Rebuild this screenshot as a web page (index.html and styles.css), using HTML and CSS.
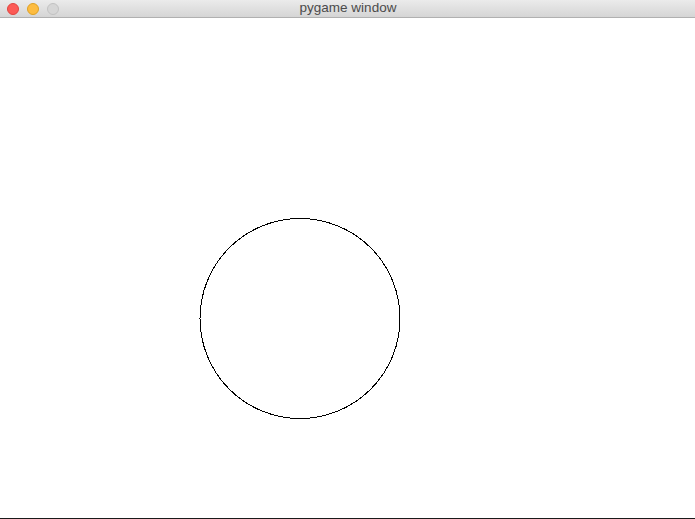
FILE: index.html
```html
<!DOCTYPE html>
<html>
<head>
<meta charset="utf-8">
<link rel="stylesheet" href="styles.css">
</head>
<body>
<div class="window">
  <div class="titlebar">
    <div class="lights">
      <span class="light red"></span>
      <span class="light yellow"></span>
      <span class="light gray"></span>
    </div>
    <div class="title">pygame window</div>
  </div>
  <div class="canvas">
    <svg class="drawing" width="695" height="500" viewBox="0 0 695 500">
      <circle cx="300" cy="300.5" r="100" fill="none" stroke="#000" stroke-width="1" shape-rendering="crispEdges"/>
    </svg>
  </div>
  <div class="bottom-edge"></div>
</div>
</body>
</html>
```
FILE: styles.css
```css
html, body {
  margin: 0;
  padding: 0;
  background: #fff;
}
.window {
  width: 695px;
  height: 519px;
  display: flex;
  flex-direction: column;
  overflow: hidden;
}
.titlebar {
  height: 17px;
  flex: none;
  background: linear-gradient(#ebebeb, #d5d5d5);
  border-bottom: 1px solid #b0b0b0;
  display: flex;
  align-items: center;
  position: relative;
}
.lights {
  display: flex;
  gap: 8px;
  padding-left: 7px;
}
.light {
  width: 12px;
  height: 12px;
  border-radius: 50%;
  box-sizing: border-box;
}
.red { background: #fc5a55; border: 1px solid #e0443e; }
.yellow { background: #fdbc40; border: 1px solid #dea123; }
.gray { background: #d6d6d6; border: 1px solid #c2c2c2; }
.title {
  position: absolute;
  left: 0;
  right: 0;
  top: 0;
  line-height: 16px;
  text-align: center;
  font-family: "Liberation Sans", Arial, sans-serif;
  font-size: 13.5px;
  color: #4b4b4b;
  padding-left: 1px;
}
.canvas {
  flex: 1;
  background: #fff;
}
.drawing {
  display: block;
}
.bottom-edge {
  height: 1px;
  flex: none;
  background: #1a1a1a;
}
```
